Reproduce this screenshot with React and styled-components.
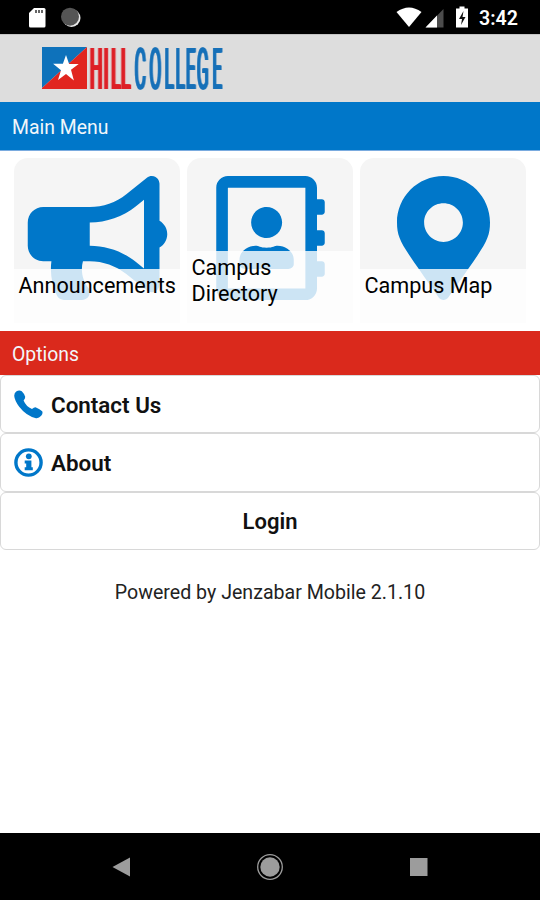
import React from 'react';
import styled, { createGlobalStyle } from 'styled-components';
import { FaBullhorn, FaRegAddressBook, FaMapMarkerAlt } from 'react-icons/fa';

const BLUE = '#0077c9';
const RED = '#da291c';

const GlobalStyle = createGlobalStyle`
  * {
    box-sizing: border-box;
  }

  body {
    margin: 0;
    background: #fff;
    font-family: Roboto, sans-serif;
  }
`;

const Screen = styled.div`
  display: flex;
  flex-direction: column;
  width: 540px;
  height: 900px;
  overflow: hidden;
`;

const StatusBar = styled.div`
  display: flex;
  justify-content: space-between;
  height: 34px;
  background: #000;
`;

const Clock = styled.div`
  margin-left: 7px;
  width: 61px;
  color: #fff;
  font-size: 19.6px;
  font-weight: 600;
  line-height: 37px;
`;

const StatusGroup = styled.div`
  display: flex;
`;

const Header = styled.header`
  height: 68px;
  padding-left: 41px;
  background: #ddd;
  border-top: 1px solid #c4c4c4;

  svg {
    display: block;
    overflow: visible;
  }
`;

const LogoText = styled.text`
  font-family: Roboto, sans-serif;
  font-weight: 400;
  font-size: 58px;
  filter: drop-shadow(${(props) => props.$bleed}px 0 0 ${(props) => props.fill})
    drop-shadow(-${(props) => props.$bleed}px 0 0 ${(props) => props.fill});
`;

const SectionBar = styled.div`
  height: ${(props) => props.$height}px;
  padding-left: 12px;
  border-bottom: ${(props) => (props.$edge ? `1px solid ${props.$edge}` : 'none')};
  background: ${(props) => props.$color};
  color: #f2f6fa;
  font-size: 19.4px;
  line-height: ${(props) => props.$line}px;
`;

const Tiles = styled.div`
  display: flex;
  gap: 7px;
  height: 180px;
  padding: 7px 14px 8px;
`;

const Tile = styled.div`
  position: relative;
  flex: 1;
  padding-top: 17.5px;
  border-radius: 14px 14px 0 0;
  background: #f5f5f5;
  color: ${BLUE};
  overflow: hidden;

  svg {
    display: block;
    height: 124px;
    width: 141px;
    margin: 0 auto 0 13px;
  }
`;

const Caption = styled.div`
  position: absolute;
  left: 0;
  right: 0;
  bottom: 0;
  height: ${(props) => (props.$tall ? 72 : 54)}px;
  padding: 4px 4px 0 4.5px;
  background: rgba(255, 255, 255, 0.8);
  color: #000;
  font-size: 21.6px;
  line-height: 26px;
`;

const Row = styled.div`
  display: flex;
  align-items: center;
  justify-content: ${(props) => (props.$center ? 'center' : 'flex-start')};
  gap: 8px;
  height: 58.4px;
  padding: 1px 13px 0;
  border: 1px solid #d8d8d8;
  border-radius: 6px;
  color: #111;
  font-size: ${(props) => (props.$center ? 22 : 22.4)}px;
  font-weight: 600;

  svg {
    margin-bottom: 1px;
  }
`;

const Options = styled.div`
  background: #fff;
`;

const Footer = styled.p`
  flex: 1;
  margin: 0;
  padding-top: 30px;
  color: #222;
  font-size: 19.6px;
  line-height: 26px;
  text-align: center;
`;

const NavBar = styled.div`
  display: flex;
  align-items: center;
  justify-content: space-around;
  height: 67px;
  padding: 0 47px;
  background: #000;
`;

const tiles = [
  { label: 'Announcements', Icon: FaBullhorn },
  { label: 'Campus Directory', Icon: FaRegAddressBook, tall: true },
  { label: 'Campus Map', Icon: FaMapMarkerAlt },
];

const Logo = () => (
  <svg width="186" height="69" viewBox="41 35 186 69">
    <path d="M42 47h45L42 88z" fill="#0e72bb" />
    <path d="M87 47v42H42v-1z" fill="#e1251f" />
    <path
      d="M66 55l3.1 9h9.6l-7.7 5.8 2.9 10.6-7.9-6.4-8 6 3-9.8-7.9-6.4h9.8z"
      fill="#fff"
    />
    <g transform="scale(0.3 1)">
      <LogoText x="300 346 371 403" y="88.7" fill="#dd1f26" $bleed="4">HILL</LogoText>
      <LogoText x="449 498 549 586 620 657 708" y="88.7" fill="#1670b8" $bleed="2.5">COLLEGE</LogoText>
    </g>
  </svg>
);

const StatusLeft = () => (
  <svg width="100" height="34">
    <path d="M34 8h10q1.500 0 1.500 1.500v16.500q0 1.500-1.500 1.500h-13.500q-1.500 0-1.500-1.500v-13z" fill="#fff" />
    <path d="M36 10v3M39 10v3M42 10v3" stroke="#333" strokeWidth="1.500" />
    <circle cx="71.500" cy="18" r="9" fill="#e8e8e8" />
    <circle cx="70" cy="16.700" r="9" fill="#555" />
  </svg>
);

const StatusIcons = () => (
  <svg width="78" height="34" viewBox="394 0 78 34">
    <path d="M396.500 12q12.500-9 25 0l-12.500 15z" fill="#fff" />
    <path d="M443.500 9v18.500h-18z" fill="#4c4c4c" />
    <path d="M437 15.500v12h-11.500z" fill="#fff" />
    <path d="M459.500 6.500h5v2h3.500v19h-12v-19h3.500z" fill="#fff" />
    <path d="M463.500 11l-4.500 8h3l-1 6 4.500-8h-3z" fill="#111" />
  </svg>
);

const PhoneIcon = () => (
  <svg width="29" height="29" viewBox="0 0 29 29" fill={BLUE}>
    <path d="M2.200 1.600Q5-.5 7.800 1.200Q10.300 3.600 11.200 6.800Q11.300 8.800 9.600 10.400Q12 16.400 18 19Q20.200 17 22 17.400Q25.800 18.800 28.200 21.200Q29.200 23.400 27.200 25.800Q24.800 28.600 22 28.200Q12.500 26.200 5.200 16.800Q.6 10.600.2 5.800Q.3 3.200 2.200 1.600z" />
  </svg>
);

const InfoIcon = () => (
  <svg width="29" height="29" viewBox="0 0 29 29" fill={BLUE}>
    <circle cx="14.500" cy="14.500" r="12.600" fill="none" stroke={BLUE} strokeWidth="3.400" />
    <circle cx="14.800" cy="8.300" r="2.900" />
    <path d="M10.700 12.400h6.700v6.900h1.400v3h-8.100v-3h1.500v-3.900h-1.500z" />
  </svg>
);

function App() {
  return (
    <Screen>
      <GlobalStyle />
      <StatusBar>
        <StatusLeft />
        <StatusGroup>
          <StatusIcons />
          <Clock>3:42</Clock>
        </StatusGroup>
      </StatusBar>
      <Header>
        <Logo />
      </Header>

      <SectionBar $color={BLUE} $height={49} $line={52} $edge="#7aabdf">Main Menu</SectionBar>
      <Tiles>
        {tiles.map(({ label, Icon, tall }) => (
          <Tile key={label}>
            <Icon />
            <Caption $tall={tall}>{label}</Caption>
          </Tile>
        ))}
      </Tiles>

      <SectionBar $color={RED} $height={44} $line={47}>Options</SectionBar>
      <Options>
        <Row>
          <PhoneIcon />
          Contact Us
        </Row>
        <Row>
          <InfoIcon />
          About
        </Row>
        <Row $center>Login</Row>
      </Options>
      <Footer>Powered by Jenzabar Mobile 2.1.10</Footer>

      <NavBar>
        <svg width="28" height="28">
          <path d="M23 4.500v19L5.500 14z" fill="#9c9c9c" />
        </svg>
        <svg width="28" height="28">
          <circle cx="14" cy="14" r="12.300" fill="none" stroke="#9c9c9c" strokeWidth="1.300" />
          <circle cx="14" cy="14" r="9.700" fill="#9c9c9c" />
        </svg>
        <svg width="28" height="28">
          <path d="M5 5h17.500v18H5z" fill="#9c9c9c" />
        </svg>
      </NavBar>
    </Screen>
  );
}

export default App;
